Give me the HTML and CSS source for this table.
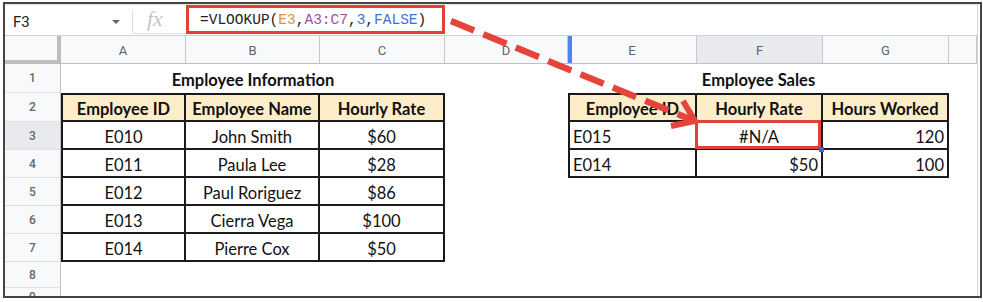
FILE: index.html
```html
<!DOCTYPE html>
<html lang="en">
<head>
<meta charset="utf-8">
<title>VLOOKUP #N/A example</title>
<link rel="stylesheet" href="styles.css">
</head>
<body>
<div class="frame">
  <div class="inner">
    <div class="fbar">
      <div class="namebox"><span class="nb-text">F3</span><span class="caret"></span></div>
      <div class="fxarea"><span class="fx">fx</span></div>
      <div class="formula">=VLOOKUP(<span class="r1">E3</span>,<span class="r2">A3:C7</span>,<span class="n">3</span>,<span class="n">FALSE</span>)</div>
    </div>
    <div class="grid">
      <div class="corner"></div>
      <div class="ch">A</div><div class="ch">B</div><div class="ch">C</div><div class="ch">D</div>
      <div class="ch ch-e">E</div><div class="ch ch-sel">F</div><div class="ch">G</div><div class="ch"></div>

      <div class="rh">1</div>
      <div class="c title span3">Employee Information</div>
      <div class="c"></div>
      <div class="c title span3">Employee Sales</div>
      <div class="c"></div>

      <div class="rh">2</div>
      <div class="c t top left th">Employee ID</div>
      <div class="c t top th">Employee Name</div>
      <div class="c t top th">Hourly Rate</div>
      <div class="c"></div>
      <div class="c t top left th">Employee ID</div>
      <div class="c t top th">Hourly Rate</div>
      <div class="c t top th">Hours Worked</div>
      <div class="c"></div>

      <div class="rh rh-sel">3</div>
      <div class="c t left">E010</div>
      <div class="c t">John Smith</div>
      <div class="c t">$60</div>
      <div class="c"></div>
      <div class="c t left al">E015</div>
      <div class="c t sel">#N/A</div>
      <div class="c t ar">120</div>
      <div class="c"></div>

      <div class="rh">4</div>
      <div class="c t left">E011</div>
      <div class="c t">Paula Lee</div>
      <div class="c t">$28</div>
      <div class="c"></div>
      <div class="c t left al">E014</div>
      <div class="c t ar">$50</div>
      <div class="c t ar">100</div>
      <div class="c"></div>

      <div class="rh">5</div>
      <div class="c t left">E012</div>
      <div class="c t">Paul Roriguez</div>
      <div class="c t">$86</div>
      <div class="c span5"></div>

      <div class="rh">6</div>
      <div class="c t left">E013</div>
      <div class="c t">Cierra Vega</div>
      <div class="c t">$100</div>
      <div class="c span5"></div>

      <div class="rh">7</div>
      <div class="c t left">E014</div>
      <div class="c t">Pierre Cox</div>
      <div class="c t">$50</div>
      <div class="c span5"></div>

      <div class="rh">8</div>
      <div class="c span8"></div>

      <div class="rh rh-last">9</div>
      <div class="c span8"></div>
    </div>
  </div>
  <svg class="arrow" width="983" height="302" viewBox="0 0 983 302" aria-hidden="true">
    <line x1="451" y1="21" x2="692" y2="120" stroke="#e5433b" stroke-width="6.5" stroke-dasharray="25 10"/>
    <polyline points="683,101 695,121 671,126" fill="none" stroke="#e5433b" stroke-width="6" stroke-linejoin="miter" stroke-linecap="butt"/>
  </svg>
</div>
</body>
</html>
```

FILE: styles.css
```css
* { box-sizing: border-box; }

html, body {
  margin: 0;
  padding: 0;
  background: #ffffff;
}

.frame {
  position: relative;
  margin: 2px 0 0 3px;
  width: 979px;
  height: 296px;
  border: 2px solid #444444;
  overflow: hidden;
  background: #ffffff;
}

.inner {
  margin-right: 2px;
  height: 100%;
  border-right: 1px solid #d4d4d4;
  overflow: hidden;
}

/* formula bar */
.fbar {
  display: flex;
  align-items: flex-start;
  height: 32px;
  border-top: 1px solid #e4e4e4;
  border-bottom: 1px solid #d2d2d2;
}

.namebox {
  width: 127px;
  height: 30px;
  display: flex;
  align-items: center;
  padding: 3px 12px 0 8px;
}

.nb-text {
  font-family: Roboto, "Liberation Sans", sans-serif;
  font-size: 15px;
  color: #202124;
}

.caret {
  margin-left: auto;
  width: 0;
  height: 0;
  border-left: 4px solid transparent;
  border-right: 4px solid transparent;
  border-top: 4px solid #666666;
}

.fxarea {
  width: 54px;
  height: 24px;
  margin-top: 5px;
  border-left: 1px solid #e0e0e0;
  border-bottom: 1px solid #e0e0e0;
  display: flex;
  align-items: center;
  padding-left: 14px;
}

.fx {
  font-family: "Liberation Serif", serif;
  font-style: italic;
  font-size: 22px;
  color: #c6c6c6;
  margin-top: -6px;
}

.formula {
  width: 259px;
  height: 29px;
  border: 3px solid #e2413a;
  padding-left: 11px;
  display: flex;
  align-items: center;
  font-family: "Liberation Mono", "DejaVu Sans Mono", monospace;
  font-size: 14.5px;
  color: #222222;
  white-space: pre;
}

.r1 { color: #e69132; }
.r2 { color: #a04aa8; }
.n  { color: #3e6fd6; }

/* grid */
.grid {
  display: grid;
  grid-template-columns: 56px 125px 134px 125px 123px 129px 126px 126px 1fr;
  grid-template-rows: 28px 29px 29px 28px 28px 28px 28px 28px 26px 28px;
  font-family: Lato, "Open Sans", sans-serif;
  font-size: 16.5px;
  color: #111111;
}

.corner {
  background: #f8f9fa;
  border-right: 4px solid #bdbdbd;
  border-bottom: 4px solid #bdbdbd;
}

.ch {
  background: #f8f9fa;
  border-right: 1px solid #c8c8c8;
  border-bottom: 1px solid #c0c0c0;
  display: flex;
  align-items: center;
  justify-content: center;
  padding-top: 2px;
  font-family: Roboto, "Liberation Sans", sans-serif;
  font-size: 13px;
  color: #5f6368;
}

.ch-sel { background: #e8eaed; }
.ch-e { box-shadow: inset 4px 0 0 #4a86f0; }

.rh {
  background: #f8f9fa;
  border-right: 1px solid #c0c0c0;
  border-bottom: 1px solid #e0e0e0;
  display: flex;
  align-items: center;
  justify-content: center;
  font-family: Roboto, "Liberation Sans", sans-serif;
  font-size: 12px;
  font-weight: 500;
  color: #666666;
}

.rh-sel { background: #e8eaed; }
.rh-last { align-items: flex-start; padding-top: 2px; }

.c {
  display: flex;
  align-items: center;
  justify-content: center;
  padding: 3px 3px 0 3px;
  white-space: nowrap;
  position: relative;
}

.span3 { grid-column: span 3; }
.span5 { grid-column: span 5; }
.span8 { grid-column: span 8; }

.title { font-weight: 700; }

.t {
  border-right: 2px solid #1a1a1a;
  border-bottom: 2px solid #1a1a1a;
}
.top { border-top: 2px solid #1a1a1a; }
.left { border-left: 2px solid #1a1a1a; }

.th {
  background: #fdedc9;
  font-weight: 700;
}

.al { justify-content: flex-start; }
.ar { justify-content: flex-end; }

.sel::after {
  content: "";
  position: absolute;
  left: -2px;
  top: -2px;
  right: 0;
  bottom: -1px;
  border: 3px solid #e2413a;
}

.sel::before {
  content: "";
  position: absolute;
  right: -3px;
  bottom: -4px;
  width: 5px;
  height: 5px;
  background: #1a73e8;
  z-index: 1;
}

.arrow {
  position: absolute;
  left: -5px;
  top: -4px;
  pointer-events: none;
}
```
